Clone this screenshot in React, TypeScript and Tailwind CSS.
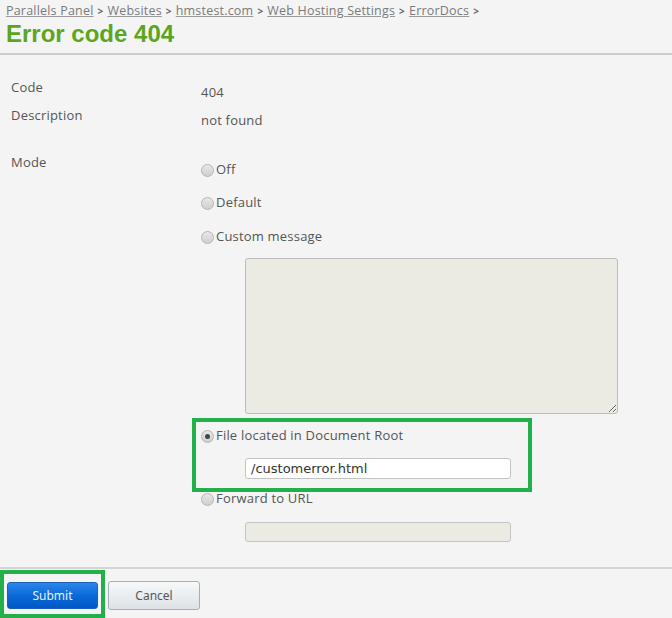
import React from "react";

const crumbs = ["Parallels Panel", "Websites", "hmstest.com", "Web Hosting Settings", "ErrorDocs"];

function Radio({ checked, label }: { checked?: boolean; label: string }) {
  return (
    <label className="flex items-center h-[18px] text-[13px] text-[#555] tracking-[0.2px]">
      <span className="w-[13px] h-[13px] rounded-full border border-[#b4b4b4] bg-gradient-to-b from-[#e8e8e8] to-[#cfcfcf] flex items-center justify-center mr-[2px]">
        {checked && <span className="w-[5px] h-[5px] rounded-full bg-[#444]" />}
      </span>
      {label}
    </label>
  );
}

export default function App() {
  return (
    <div
      className="w-[672px] h-[618px] bg-[#f4f4f4] overflow-hidden relative"
      style={{ fontFamily: '"Open Sans", "Noto Sans", sans-serif' }}
    >
      {/* breadcrumb */}
      <div className="flex items-center h-[16px] mt-[3px] pl-[6px] text-[12.5px] text-[#7a7a7a] leading-[16px] tracking-[0.2px]">
        {crumbs.map((c) => (
          <span key={c} className="flex items-center">
            <a className="underline decoration-[#999]">{c}</a>
            <span className="mx-[4px] text-[10px] font-bold text-[#666]">&gt;</span>
          </span>
        ))}
      </div>
      <h1
        className="pl-[6px] h-[30px] leading-[30px] text-[24px] font-bold text-[#5ba61c]"
        style={{ fontFamily: '"Liberation Sans", Arial, sans-serif' }}
      >
        Error code 404
      </h1>
      <div className="mt-[4px] border-t-2 border-[#cdcdcd]" />

      {/* form */}
      <div className="mt-[23px] text-[13px] text-[#555] tracking-[0.2px]">
        <div className="flex h-[28px]">
          <div className="w-[201px] pl-[11px] leading-[18px]">Code</div>
          <div className="pt-[5px] leading-[18px]">404</div>
        </div>
        <div className="flex h-[47px]">
          <div className="w-[201px] pl-[11px] leading-[18px]">Description</div>
          <div className="pt-[5px] leading-[18px]">not found</div>
        </div>
        <div className="flex">
          <div className="w-[201px] pl-[11px] leading-[18px]">Mode</div>
          <div className="pt-[8px] flex flex-col">
            <div className="h-[33px]">
              <Radio label="Off" />
            </div>
            <div className="h-[34px]">
              <Radio label="Default" />
            </div>
            <Radio label="Custom message" />
            <textarea
              disabled
              className="mt-[12px] ml-[44px] w-[373px] h-[156px] bg-[#ebeae3] border border-[#bcbcbc] rounded-[3px] resize"
            />
            <div className="relative mt-[13px]">
              <div className="absolute left-[-9px] top-[-9px] w-[340px] h-[74px] border-4 border-[#22b04b] pointer-events-none" />
              <Radio checked label="File located in Document Root" />
              <div
                className="mt-[13px] ml-[44px] w-[266px] h-[21px] bg-white border border-[#c4c4c4] rounded-[3px] px-[5px] flex items-center text-[13px] text-[#333] tracking-normal"
                style={{ fontFamily: '"DejaVu Sans", "Noto Sans", sans-serif' }}
              >
                /customerror.html
              </div>
            </div>
            <div className="mt-[11px]">
              <Radio label="Forward to URL" />
            </div>
            <div className="mt-[14px] ml-[44px] w-[266px] h-[20px] bg-[#ebeae3] border border-[#c4c4c4] rounded-[3px]" />
          </div>
        </div>
      </div>

      <div className="mt-[25px] border-t-2 border-[#d4d4d4]" />

      {/* buttons */}
      <div className="relative flex items-center gap-[10px] pl-[7px] mt-[12px]" style={{ fontFamily: '"Noto Sans", sans-serif' }}>
        <div className="absolute left-0 top-[-11px] w-[105px] h-[48px] border-4 border-[#22b04b] pointer-events-none" />
        <button className="w-[91px] h-[27px] rounded-[3px] border border-[#1b5fb8] bg-gradient-to-b from-[#2a86e8] via-[#0a6ad9] to-[#0058c4] text-[#e8f2ff] text-[12px] font-normal">
          Submit
        </button>
        <button className="w-[92px] h-[29px] rounded-[3px] border border-[#a7aeb5] bg-gradient-to-b from-[#f7f9fa] to-[#dce2e7] text-[#555] text-[12px]">
          Cancel
        </button>
      </div>
    </div>
  );
}
